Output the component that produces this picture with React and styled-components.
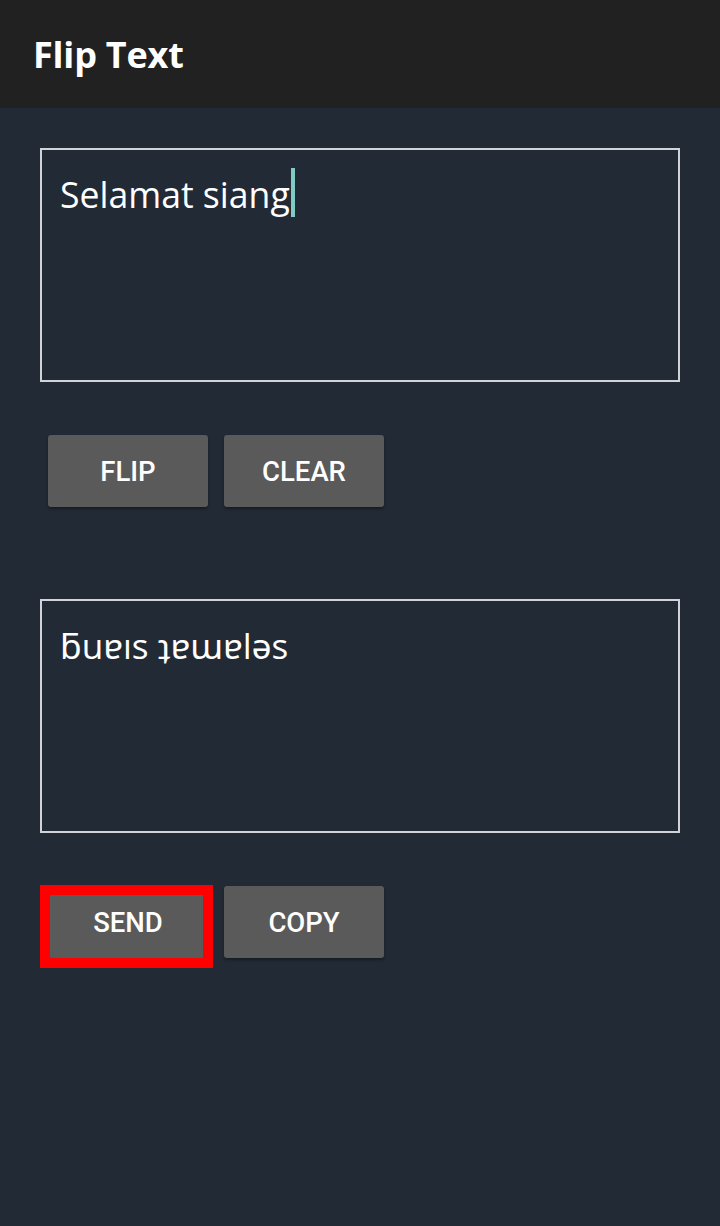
import React from 'react';
import styled, { createGlobalStyle } from 'styled-components';

const GlobalStyle = createGlobalStyle`
  html, body {
    margin: 0;
    padding: 0;
    background: #222a35;
  }
  #root {
    min-height: 1226px;
  }
`;

const Screen = styled.div`
  width: 720px;
  min-height: 1226px;
  background: #222a35;
  display: flex;
  flex-direction: column;
`;

const Toolbar = styled.header`
  height: 108px;
  background: #212121;
  display: flex;
  align-items: center;
  padding-left: 33px;
  box-sizing: border-box;
`;

const Title = styled.h1`
  margin: 0;
  color: #ffffff;
  font-family: 'Open Sans', 'Noto Sans', sans-serif;
  font-weight: 700;
  font-size: 36px;
  letter-spacing: -0.2px;
`;

const Body = styled.main`
  padding: 40px 40px 0;
  display: flex;
  flex-direction: column;
`;

const TextBox = styled.div`
  height: 234px;
  border: 2px solid #d0d4d8;
  box-sizing: border-box;
  padding: 20px 18px;
  color: #ffffff;
  font-family: 'Open Sans', 'Noto Sans', sans-serif;
  font-size: ${p => p.$size}px;
  line-height: 48px;
  display: flex;
  align-items: flex-start;
`;

const Caret = styled.span`
  display: inline-block;
  width: 4px;
  height: 49px;
  background: #80cbc4;
  margin-left: 1px;
  margin-top: -2px;
`;

const ButtonRow = styled.div`
  display: flex;
  gap: 16px;
  padding-left: 8px;
  margin-top: ${p => p.$top}px;
  align-items: flex-start;
`;

const Button = styled.button`
  width: 160px;
  height: 72px;
  border: none;
  border-radius: 3px;
  background: #5a5a5a;
  color: #ffffff;
  font-family: Roboto, 'Liberation Sans', sans-serif;
  font-weight: 500;
  font-size: 27.5px;
  text-transform: uppercase;
  box-shadow: 0 2px 3px rgba(0, 0, 0, 0.35);
  padding: 0;
  cursor: pointer;
`;

const Marked = styled.div`
  position: relative;
  display: flex;

  &::after {
    content: '';
    position: absolute;
    left: -8px;
    top: -1px;
    width: 173px;
    height: 83px;
    box-sizing: border-box;
    border: 10px solid #ff0000;
    pointer-events: none;
  }
`;

const Spacer = styled.div`
  height: ${p => p.$h}px;
`;

export default function App() {
  return (
    <>
      <GlobalStyle />
      <Screen>
        <Toolbar>
          <Title>Flip Text</Title>
        </Toolbar>
        <Body>
          <TextBox $size={35.6}>
            <span>Selamat siang</span>
            <Caret />
          </TextBox>
          <ButtonRow $top={53}>
            <Button>Flip</Button>
            <Button>Clear</Button>
          </ButtonRow>
          <Spacer $h={92} />
          <TextBox $size={35.2}>
            <span>ƃuɐıs ʇɐɯɐlǝs</span>
          </TextBox>
          <ButtonRow $top={53}>
            <Marked>
              <Button>Send</Button>
            </Marked>
            <Button>Copy</Button>
          </ButtonRow>
        </Body>
      </Screen>
    </>
  );
}
